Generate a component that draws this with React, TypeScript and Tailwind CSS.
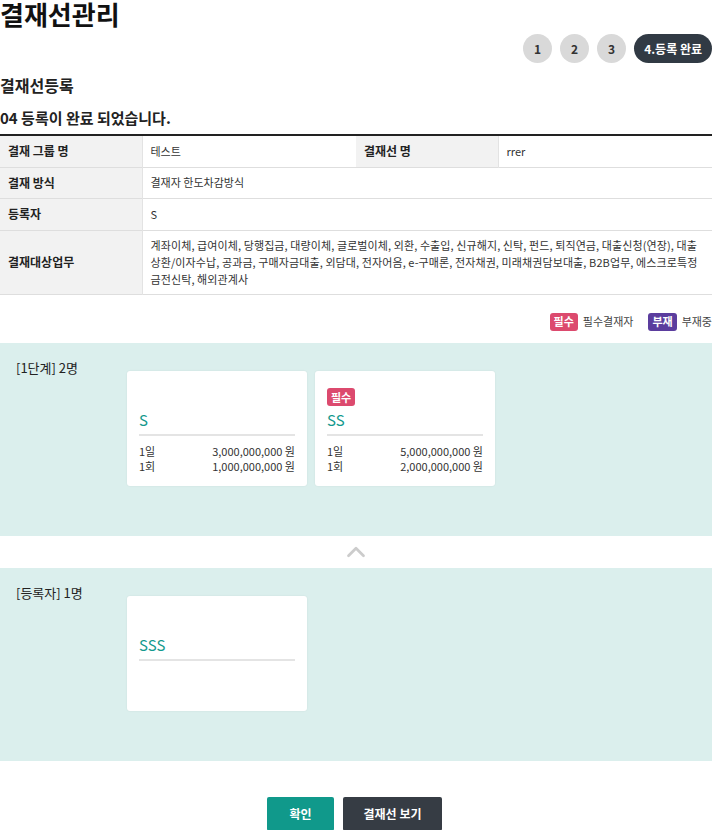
import { ChevronUp } from "lucide-react";

type Limit = { label: string; amount: string };
type Approver = { name: string; required?: boolean; limits?: Limit[] };

const stages: { title: string; approvers: Approver[] }[] = [
  {
    title: "[1단계] 2명",
    approvers: [
      {
        name: "S",
        limits: [
          { label: "1일", amount: "3,000,000,000 원" },
          { label: "1회", amount: "1,000,000,000 원" },
        ],
      },
      {
        name: "SS",
        required: true,
        limits: [
          { label: "1일", amount: "5,000,000,000 원" },
          { label: "1회", amount: "2,000,000,000 원" },
        ],
      },
    ],
  },
  { title: "[등록자] 1명", approvers: [{ name: "SSS" }] },
];

const tasks =
  "계좌이체, 급여이체, 당행집금, 대량이체, 글로벌이체, 외환, 수출입, 신규해지, 신탁, 펀드, 퇴직연금, 대출신청(연장), 대출상환/이자수납, 공과금, 구매자금대출, 외담대, 전자어음, e-구매론, 전자채권, 미래채권담보대출, B2B업무, 에스크로특정금전신탁, 해외관계사";

const ApproverCard = ({ approver }: { approver: Approver }) => (
  <div className="w-[180px] h-[115px] bg-white rounded-[3px] shadow-[0_0_2px_rgba(0,0,0,0.08)] px-3 pt-3">
    {/* 필수 badge area - kept even when empty */}
    <div className="h-[18px]">
      {approver.required && (
        <span className="inline-flex items-center justify-center h-[18px] px-[4px] rounded-[3px] bg-[#dc4a6e] text-white text-[11px] font-bold leading-none">
          필수
        </span>
      )}
    </div>
    <div className="mt-[9px] text-[15px] leading-[20px] text-[#14998d]">{approver.name}</div>
    <div className="mt-[4px] border-t-2 border-[#e4e4e4]" />
    {approver.limits && (
      <div className="mt-[8px] text-[11px] leading-[15px] text-[#333]">
        {approver.limits.map((l) => (
          <div key={l.label} className="flex justify-between">
            <span>{l.label}</span>
            <span>{l.amount}</span>
          </div>
        ))}
      </div>
    )}
  </div>
);

const StageBox = ({ title, approvers }: { title: string; approvers: Approver[] }) => (
  <div className="flex bg-[#dbefed] pb-[50px]">
    <div className="w-[127px] shrink-0 pl-4 pt-[15px] text-[13px] leading-[20px] text-[#222]">{title}</div>
    <div className="flex gap-2 pt-[28px]">
      {approvers.map((a) => (
        <ApproverCard key={a.name} approver={a} />
      ))}
    </div>
  </div>
);

const Th = ({ children }: { children: React.ReactNode }) => (
  <th className="bg-[#f2f2f2] border-r border-[#e3e3e3] text-left align-middle px-2 text-[12px] font-bold text-[#222]">
    {children}
  </th>
);

const Td = ({ children, colSpan }: { children: React.ReactNode; colSpan?: number }) => (
  <td colSpan={colSpan} className="px-2 align-middle text-[11px] text-[#333]">
    {children}
  </td>
);

export default function App() {
  return (
    <div
      className="w-[712px] bg-white text-[#222]"
      style={{ fontFamily: '"Noto Sans CJK KR", "Noto Sans", sans-serif' }}
    >
      <h1 className="text-[26px] font-bold leading-[28px] text-[#111]">결재선관리</h1>

      {/* Step indicator */}
      <div className="flex justify-end gap-2 mt-[6px]">
        {["1", "2", "3"].map((n) => (
          <div
            key={n}
            className="w-[29px] h-[29px] rounded-full bg-[#d9d9d9] text-[#333] text-[12px] font-bold flex items-center justify-center"
          >
            {n}
          </div>
        ))}
        <div className="h-[29px] px-[10px] rounded-full bg-[#313a44] text-white text-[12px] font-bold flex items-center">
          4.등록 완료
        </div>
      </div>

      <h2 className="mt-[10px] text-[16px] font-bold leading-[24px]">결재선등록</h2>
      <p className="mt-[10px] text-[15px] font-bold leading-[22px]">04 등록이 완료 되었습니다.</p>

      <table className="mt-[5px] w-full border-collapse border-t-2 border-[#222] table-fixed">
        <colgroup>
          <col className="w-[142px]" />
          <col className="w-[214px]" />
          <col className="w-[142px]" />
          <col />
        </colgroup>
        <tbody>
          <tr className="h-[32px] border-b border-[#dedede]">
            <Th>결재 그룹 명</Th>
            <Td>테스트</Td>
            <Th>결재선 명</Th>
            <Td>rrer</Td>
          </tr>
          <tr className="h-[31px] border-b border-[#dedede]">
            <Th>결재 방식</Th>
            <Td colSpan={3}>결재자 한도차감방식</Td>
          </tr>
          <tr className="h-[32px] border-b border-[#dedede]">
            <Th>등록자</Th>
            <Td colSpan={3}>S</Td>
          </tr>
          <tr className="h-[64px] border-b border-[#dedede]">
            <Th>결재대상업무</Th>
            <td colSpan={3} className="px-2 py-[5px] text-[11px] leading-[17px] tracking-[0.1px] text-[#333]">
              {tasks}
            </td>
          </tr>
        </tbody>
      </table>

      {/* Legend */}
      <div className="flex justify-end items-center gap-[15px] mt-[18px] mb-[12px] text-[11px] text-[#444]">
        <div className="flex items-center gap-[5px]">
          <span className="h-[18px] px-[4px] rounded-[3px] bg-[#dc4a6e] text-white font-bold flex items-center leading-none">
            필수
          </span>
          필수결재자
        </div>
        <div className="flex items-center gap-[5px]">
          <span className="h-[18px] px-[4px] rounded-[3px] bg-[#5b3d9e] text-white font-bold flex items-center leading-none">
            부재
          </span>
          부재중
        </div>
      </div>

      <StageBox title={stages[0].title} approvers={stages[0].approvers} />
      <div className="h-[32px] flex items-center justify-center">
        <ChevronUp size={30} strokeWidth={2.2} className="text-[#cccccc]" />
      </div>
      <StageBox title={stages[1].title} approvers={stages[1].approvers} />

      {/* Buttons */}
      <div className="flex justify-center gap-[9px] mt-[36px] pr-[3px] pb-4">
        <button className="w-[67px] h-[34px] rounded-[2px] bg-[#10998b] text-white text-[12px] font-bold">확인</button>
        <button className="w-[99px] h-[34px] rounded-[2px] bg-[#363c44] text-white text-[12px] font-bold">
          결재선 보기
        </button>
      </div>
    </div>
  );
}
